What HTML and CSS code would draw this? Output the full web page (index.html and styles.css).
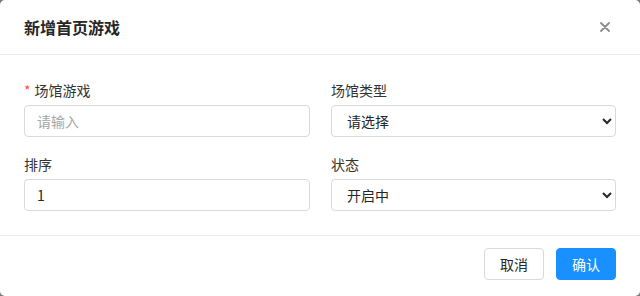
FILE: index.html
```html
<!DOCTYPE html>
<html lang="zh-CN">
<head>
  <meta charset="UTF-8" />
  <meta name="viewport" content="width=device-width, initial-scale=1.0" />
  <title>新增首页游戏</title>
  <link rel="stylesheet" href="styles.css">
</head>
<body>
  <div class="modal">
    <div class="modal-header">
      <div class="modal-title">新增首页游戏</div>
      <button class="modal-close" aria-label="关闭">
        <svg width="10" height="10" viewBox="0 0 10 10">
          <path d="M1 1L9 9M9 1L1 9" stroke="#8c8c8c" stroke-width="1.8" stroke-linecap="round" />
        </svg>
      </button>
    </div>
    <div class="modal-body">
      <div class="form-grid">
        <div class="form-item">
          <label class="required" for="game">场馆游戏</label>
          <input type="text" id="game" class="form-input" placeholder="请输入" />
        </div>
        <div class="form-item">
          <label for="type">场馆类型</label>
          <select id="type" class="form-input form-select">
            <option>请选择</option>
          </select>
        </div>
        <div class="form-item">
          <label for="sort">排序</label>
          <input type="text" id="sort" class="form-input" value="1" />
        </div>
        <div class="form-item">
          <label for="status">状态</label>
          <select id="status" class="form-input form-select">
            <option>开启中</option>
            <option>已关闭</option>
          </select>
        </div>
      </div>
    </div>
    <div class="modal-footer">
      <button class="btn">取消</button>
      <button class="btn btn-primary">确认</button>
    </div>
  </div>
</body>
</html>
```

FILE: styles.css
```css
html, body {
  margin: 0;
  padding: 0;
  height: 100%;
}
body {
  background-color: #7a7a7a;
  font-family: "Noto Sans CJK SC", "Liberation Sans", sans-serif;
  color: #333;
}
.modal {
  box-sizing: border-box;
  height: 296px;
  background-color: #fff;
  border-radius: 5px;
  overflow: hidden;
}
.modal-header {
  display: flex;
  justify-content: space-between;
  align-items: center;
  height: 54px;
  padding: 0 24px;
  border-bottom: 1px solid #ebebeb;
}
.modal-title {
  font-size: 16px;
  font-weight: bold;
  color: #262626;
}
.modal-close {
  display: flex;
  align-items: center;
  justify-content: center;
  width: 22px;
  height: 22px;
  padding: 0;
  background: transparent;
  border: none;
  cursor: pointer;
}
.modal-body {
  padding: 24px 24px 24px;
  border-bottom: 1px solid #ebebeb;
}
.form-grid {
  display: grid;
  grid-template-columns: 286px 285px;
  column-gap: 21px;
  row-gap: 16px;
}
.form-item label {
  display: block;
  font-size: 14px;
  line-height: 22px;
  margin-bottom: 4px;
  color: #333;
}
.form-item label.required::before {
  content: "*";
  color: #ff4d4f;
  margin-right: 4px;
}
.form-input {
  display: block;
  width: 100%;
  height: 32px;
  box-sizing: border-box;
  padding: 0 12px;
  font-family: inherit;
  font-size: 14px;
  color: #262626;
  background-color: #fff;
  border: 1px solid #d9d9d9;
  border-radius: 4px;
  outline: none;
}
.form-input::placeholder {
  color: #a6a6a6;
}
.form-select {
  padding: 0 6px 0 11px;
}
.modal-footer {
  display: flex;
  justify-content: flex-end;
  gap: 12px;
  padding: 12px 24px;
}
.btn {
  height: 32px;
  padding: 0 15px;
  font-family: inherit;
  font-size: 14px;
  color: #262626;
  background-color: #fff;
  border: 1px solid #d9d9d9;
  border-radius: 4px;
  cursor: pointer;
}
.btn-primary {
  color: #fff;
  background-color: #1890ff;
  border-color: #1890ff;
}
```
